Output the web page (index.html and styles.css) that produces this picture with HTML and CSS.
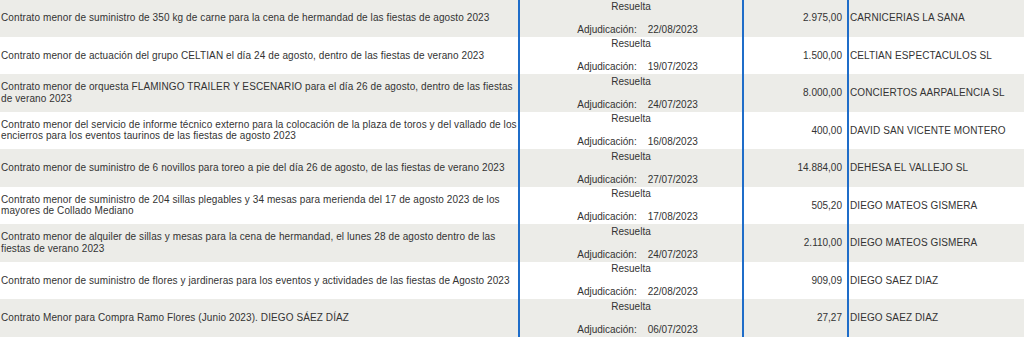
FILE: index.html
```html
<!DOCTYPE html>
<html lang="es">
<head>
<meta charset="utf-8">
<title>Contratos menores</title>
<link rel="stylesheet" href="styles.css">
</head>
<body>
<table class="contracts">
  <colgroup>
    <col class="c-desc"><col class="c-status"><col class="c-amount"><col class="c-company">
  </colgroup>
  <tbody>
    <tr class="odd">
      <td class="desc">Contrato menor de suministro de 350 kg de carne para la cena de hermandad de las fiestas de agosto 2023</td>
      <td class="status"><div>Resuelta</div><div class="blank"></div><div class="adj"><span>Adjudicación:</span><span class="date">22/08/2023</span></div></td>
      <td class="amount">2.975,00</td>
      <td class="company">CARNICERIAS LA SANA</td>
    </tr>
    <tr>
      <td class="desc">Contrato menor de actuación del grupo CELTIAN el día 24 de agosto, dentro de las fiestas de verano 2023</td>
      <td class="status"><div>Resuelta</div><div class="blank"></div><div class="adj"><span>Adjudicación:</span><span class="date">19/07/2023</span></div></td>
      <td class="amount">1.500,00</td>
      <td class="company">CELTIAN ESPECTACULOS SL</td>
    </tr>
    <tr class="odd">
      <td class="desc">Contrato menor de orquesta FLAMINGO TRAILER Y ESCENARIO para el día 26 de agosto, dentro de las fiestas de verano 2023</td>
      <td class="status"><div>Resuelta</div><div class="blank"></div><div class="adj"><span>Adjudicación:</span><span class="date">24/07/2023</span></div></td>
      <td class="amount">8.000,00</td>
      <td class="company">CONCIERTOS AARPALENCIA SL</td>
    </tr>
    <tr>
      <td class="desc">Contrato menor del servicio de informe técnico externo para la colocación de la plaza de toros y del vallado de los encierros para los eventos taurinos de las fiestas de agosto 2023</td>
      <td class="status"><div>Resuelta</div><div class="blank"></div><div class="adj"><span>Adjudicación:</span><span class="date">16/08/2023</span></div></td>
      <td class="amount">400,00</td>
      <td class="company">DAVID SAN VICENTE MONTERO</td>
    </tr>
    <tr class="odd">
      <td class="desc">Contrato menor de suministro de 6 novillos para toreo a pie del día 26 de agosto, de las fiestas de verano 2023</td>
      <td class="status"><div>Resuelta</div><div class="blank"></div><div class="adj"><span>Adjudicación:</span><span class="date">27/07/2023</span></div></td>
      <td class="amount">14.884,00</td>
      <td class="company">DEHESA EL VALLEJO SL</td>
    </tr>
    <tr>
      <td class="desc">Contrato menor de suministro de 204 sillas plegables y 34 mesas para merienda del 17 de agosto 2023 de los mayores de Collado Mediano</td>
      <td class="status"><div>Resuelta</div><div class="blank"></div><div class="adj"><span>Adjudicación:</span><span class="date">17/08/2023</span></div></td>
      <td class="amount">505,20</td>
      <td class="company">DIEGO MATEOS GISMERA</td>
    </tr>
    <tr class="odd">
      <td class="desc">Contrato menor de alquiler de sillas y mesas para la cena de hermandad, el lunes 28 de agosto dentro de las fiestas de verano 2023</td>
      <td class="status"><div>Resuelta</div><div class="blank"></div><div class="adj"><span>Adjudicación:</span><span class="date">24/07/2023</span></div></td>
      <td class="amount">2.110,00</td>
      <td class="company">DIEGO MATEOS GISMERA</td>
    </tr>
    <tr>
      <td class="desc">Contrato menor de suministro de flores y jardineras para los eventos y actividades de las fiestas de Agosto 2023</td>
      <td class="status"><div>Resuelta</div><div class="blank"></div><div class="adj"><span>Adjudicación:</span><span class="date">22/08/2023</span></div></td>
      <td class="amount">909,09</td>
      <td class="company">DIEGO SAEZ DIAZ</td>
    </tr>
    <tr class="odd">
      <td class="desc">Contrato Menor para Compra Ramo Flores (Junio 2023). DIEGO SÁEZ DÍAZ</td>
      <td class="status"><div>Resuelta</div><div class="blank"></div><div class="adj"><span>Adjudicación:</span><span class="date">06/07/2023</span></div></td>
      <td class="amount">27,27</td>
      <td class="company">DIEGO SAEZ DIAZ</td>
    </tr>
  </tbody>
</table>
</body>
</html>
```

FILE: styles.css
```css
html, body {
  margin: 0;
  padding: 0;
  background: #ffffff;
}

body {
  font-family: "Liberation Sans", Arial, sans-serif;
  font-size: 10px;
  color: #333333;
  overflow: hidden;
}

.contracts {
  width: 1024px;
  margin-top: -1px;
  border-collapse: separate;
  border-spacing: 0;
  table-layout: fixed;
}

.c-desc { width: 518px; }
.c-status { width: 226px; }
.c-amount { width: 105px; }
.c-company { width: auto; }

.contracts td {
  padding: 0;
  vertical-align: middle;
  line-height: 11.5px;
}

.contracts tr.odd td {
  background: #ececE8;
}

.desc {
  padding-left: 1px !important;
  text-align: left;
  letter-spacing: 0.1px;
}

.status {
  border-left: 2px solid #1f6dc9;
  border-right: 2px solid #1f6dc9;
  padding: 1.5px 0 !important;
  text-align: center;
}

.status .blank {
  height: 11.5px;
}

.adj {
  padding-left: 13px;
}

.adj .date {
  margin-left: 11px;
}

.amount {
  text-align: right;
  padding-right: 5px !important;
  border-right: 2px solid #1f6dc9;
}

.company {
  padding-left: 1px !important;
  white-space: nowrap;
  letter-spacing: 0.1px;
}
```
